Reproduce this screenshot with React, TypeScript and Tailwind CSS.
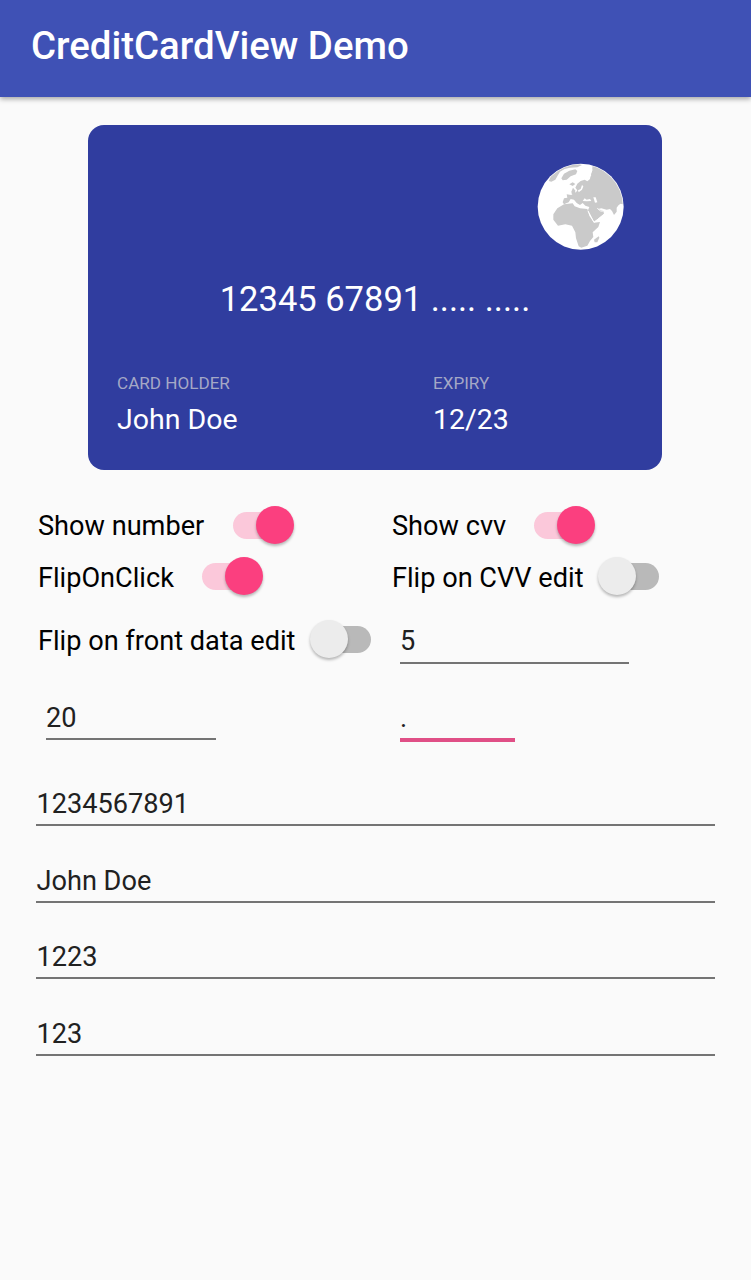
import React from "react";

function Globe() {
  return (
    <svg viewBox="0 0 306 306" className="h-[102px] w-[102px]">
      <defs>
        <clipPath id="disc">
          <circle cx="152" cy="155" r="127" />
        </clipPath>
      </defs>
      <circle cx="152" cy="155" r="129" fill="#fff" />
      <g clipPath="url(#disc)" fill="#cacaca">
        <path d="M56 78 L66 56 L88 38 L112 28 L140 24 L156 30 L142 37 L120 38 L104 42 L90 50 L84 60 L76 74 L64 80 Z" />
        <path d="M94 70 L102 56 L118 47 L136 43 L142 48 L138 58 L122 64 L110 74 L98 76 Z" />
        <path d="M118 88 L128 82 L136 87 L128 93 Z" />
        <path d="M124 110 L129 98 L135 106 L137 116 L126 119 Z" />
        <path d="M136 98 L142 86 L152 78 L164 74 L172 79 L180 72 L182 60 L186 50 L188 28 L240 40 L290 90 L290 150 L272 146 L266 150 L260 158 L260 170 L252 180 L246 168 L240 162 L230 164 L214 160 L204 162 L220 168 L222 176 L206 190 L192 200 L184 186 L174 166 L178 156 L166 152 L158 144 L150 150 L140 144 L132 134 L122 132 L116 142 L102 148 L98 142 L102 130 L112 128 L110 118 L124 120 L138 112 L142 106 Z" />
        <path d="M102 148 L128 145 L134 154 L150 160 L172 162 L178 182 L192 203 L210 201 L205 216 L188 232 L190 246 L180 258 L172 272 L154 278 L146 274 L138 250 L136 232 L126 212 L106 208 L84 212 L70 194 L70 178 L82 160 Z" />
        <path d="M194 262 L192 254 L206 244 L208 248 L202 262 Z" />
        <path d="M24 192 L30 196 L36 212 L34 222 L20 210 Z" />
      </g>
      <g fill="#fff">
        <path d="M156 38 L168 32 L184 38 L188 46 L178 52 L184 60 L176 72 L166 66 L154 62 L150 48 Z" />
        <path d="M158 138 L164 130 L170 134 L180 132 L184 138 L170 139 Z" />
        <path d="M190 127 L197 127 L202 142 L195 143 Z" />
        <path d="M144 106 L152 102 L156 90 L160 94 L156 104 L146 112 Z" />
      </g>
      <path d="M174 168 L192 202 L222 178" fill="none" stroke="#fff" strokeWidth="3" />
      <path d="M202 160 L212 168 L220 168" fill="none" stroke="#fff" strokeWidth="3" />
    </svg>
  );
}

function Switch({ on = false }: { on?: boolean }) {
  return (
    <span role="switch" aria-checked={on} className={`grid h-[38px] w-[61px] shrink-0 items-center ${on ? "justify-items-start" : "justify-items-end"}`}>
      <span className={`col-start-1 row-start-1 h-[27px] w-[54px] rounded-full ${on ? "bg-[#fbc8da]" : "bg-[#b9b9b9]"}`} />
      <span className={`col-start-1 row-start-1 h-[38px] w-[38px] rounded-full shadow-[0_2px_3px_rgba(0,0,0,0.28)] ${on ? "justify-self-end bg-[#fb3f7f]" : "justify-self-start bg-[#ececec]"}`} />
    </span>
  );
}

function Field({ value, className = "h-[38px] pl-[0.5px] leading-[32px]" }: { value: string; className?: string }) {
  return <div className={`border-b-2 border-[#747474] text-[#212121] ${className}`}>{value}</div>;
}

export default function App() {
  return (
    <div className="flex h-[1280px] w-[751px] flex-col bg-[#fafafa] font-['Roboto',sans-serif] text-[27.15px] text-black">
      <header className="h-[97px] shrink-0 bg-[#3f51b5] pt-[24px] pl-[31px] text-[38.4px] leading-[44px] font-medium text-white shadow-[0_2px_5px_rgba(0,0,0,0.35)]">
        CreditCardView Demo
      </header>

      <section className="mt-[28px] ml-[88px] flex h-[345px] w-[574px] shrink-0 flex-col rounded-[16px] bg-[#303d9f] pt-[30px] text-white">
        <div className="mr-[30px] self-end">
          <Globe />
        </div>
        <div className="mt-[22px] text-center text-[34.5px] leading-[40px]">12345 67891 ..... .....</div>
        <div className="mt-[54px] flex pl-[29px]">
          <div className="w-[316px]">
            <div className="text-[17.1px] leading-[20px] text-[#a4a8c6]">CARD HOLDER</div>
            <div className="mt-[9px] text-[28.5px] leading-[36px]">John Doe</div>
          </div>
          <div>
            <div className="text-[17.1px] leading-[20px] text-[#a4a8c6]">EXPIRY</div>
            <div className="mt-[9px] text-[28.5px] leading-[36px]">12/23</div>
          </div>
        </div>
      </section>

      <section className="mt-[36px] grid shrink-0 grid-cols-[354px_1fr] pl-[38px] leading-[40px]">
        <div className="flex h-[51px]">
          <span className="w-[195px]">Show number</span>
          <Switch on />
        </div>
        <div className="flex h-[51px]">
          <span className="w-[142px]">Show cvv</span>
          <Switch on />
        </div>
        <div className="flex h-[51px]">
          <span className="w-[164px] leading-[42px]">FlipOnClick</span>
          <Switch on />
        </div>
        <div className="flex h-[51px]">
          <span className="w-[206px] leading-[42px]">Flip on CVV edit</span>
          <Switch />
        </div>
        <div className="flex h-[77px] pt-[12px]">
          <span className="w-[272px] leading-[42px] whitespace-nowrap">Flip on front data edit</span>
          <Switch />
        </div>
        <div className="h-[77px] pt-[17px] pl-[8px]">
          <Field value="5" className="h-[38.5px] w-[229px] leading-[32px]" />
        </div>
        <div className="pt-[16px] pl-[8px]">
          <Field value="20" className="h-[39px] w-[170px] leading-[34px]" />
        </div>
        <div className="pt-[16px] pl-[8px]">
          <div className="h-[41px] w-[115px] border-b-4 border-[#e04f86] leading-[34px] text-[#212121]">.</div>
        </div>
      </section>

      <section className="mt-[46px] flex flex-col gap-[38.6px] px-[36px]">
        <Field value="1234567891" />
        <Field value="John Doe" />
        <Field value="1223" />
        <Field value="123" />
      </section>
    </div>
  );
}
